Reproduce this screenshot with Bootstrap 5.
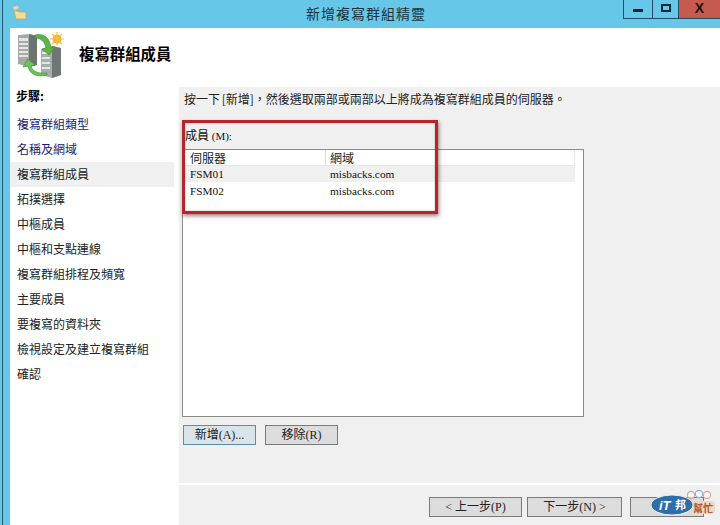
<!DOCTYPE html>
<html lang="zh-Hant">
<head>
<meta charset="utf-8">
<title>新增複寫群組精靈</title>
<link href="https://cdn.jsdelivr.net/npm/bootstrap@5.3.0/dist/css/bootstrap.min.css" rel="stylesheet">
<style>
html,body{width:720px;height:525px;overflow:hidden;margin:0;background:#67c7e8;font-family:"Liberation Serif","Noto Sans CJK TC",serif;font-size:12px;color:#111;line-height:16px}
.frame{position:relative;width:720px;height:525px;padding-left:10px}
.edge{position:absolute;left:2px;top:0;bottom:0;width:1px;background:#27566c}
.titlebar{height:28px;margin-left:-10px;position:relative}
.app-ico{position:absolute;left:11px;top:4px}
.wintitle{position:absolute;left:0;right:0;top:4px;text-align:center;font-size:14px;letter-spacing:1px;line-height:18px;padding-left:12px;color:#1c3440;font-family:"Noto Sans CJK TC",sans-serif}
.winbtns{position:absolute;right:0;top:0;height:19px}
.wb{height:19px;border:1px solid #1f4d66;border-top:0}
.wb-min{width:29px;border-right:0}
.wb-max{width:26px;border-right:0}
.wb-close{width:42px;background:#c75a4e;border:1px solid #1f4d66;border-top:0;border-right:0;font:bold 14px/17px "Liberation Sans",sans-serif;color:#21100e;text-align:center}
.glyph-min{width:10px;height:3px;background:#0c2436;margin-top:9px}
.glyph-max{width:10px;height:8px;border:2px solid #0c2436;margin-top:4px}
.headpane{height:56px;background:#fff;padding-left:7px;width:710px;padding-bottom:2px}
.headtitle{font-size:15.4px;font-weight:700;margin-left:15px;margin-top:-4px;font-family:"Noto Sans CJK TC",sans-serif;color:#000}
.bodypane{height:441px;width:710px;background:#fff}
.steps{width:164px;background:#fff;margin-top:3px}
.steps-h{height:25px;padding:1px 6px;font-weight:700;font-family:"Noto Sans CJK TC",sans-serif;color:#000}
.step{height:25px;line-height:24px;padding-left:7px;font-family:"Noto Sans CJK TC",sans-serif;color:#222;width:164px}
.step-done{color:#1b1b6b}
.step-on{background:#f0f0f0}
.content{width:542px;margin-left:4px;margin-top:3px;background:#f0f0f0;height:438px;border-left:1px solid #fafafa}
.mainpane{height:398px;padding:4px 5px;border-bottom:2px solid #fff}
.intro{font-family:"Noto Sans CJK TC",sans-serif;color:#222;white-space:nowrap;height:16px;word-spacing:-1px}
.label-m{margin-top:21px;height:16px;margin-left:1px}
.lat{font-size:11px}
.listbox{width:402px;height:268px;margin-top:5px;border:1px solid #8a8a8a;background:#fff;margin-left:-2px}
.lhead{height:16px;padding-left:7px;color:#222;font-family:"Noto Sans CJK TC",sans-serif;line-height:16px;width:392px;border-bottom:1px solid #e6e6e6;border-right:1px solid #e6e6e6}
.lrow{height:16px;padding-left:7px;width:392px;font-size:11.3px}
.lrow-2{height:17px;padding-top:1px}
.lrow-on{background:#f0f0f0}
.c1{width:136px;flex:none}
.c1h{border-right:1px solid #ddd}
.c2{padding-left:4px}
.wbtn{height:20px;padding:0;border:1px solid #7a7a7a;border-radius:0;background:#dcdcdc;font-size:12px;line-height:16px;color:#222;font-family:"Liberation Serif","Noto Sans CJK TC",serif;text-align:center}
.w73{width:73px}
.wbtn-focus{border-color:#5d8cab;background:#d8e3ea}
.gap9{gap:9px}
.btnrow{margin-top:8px;margin-left:-1px}
.footbar{padding:12px 0 0 250px;gap:5px}
.w93{width:93px}
.w95{width:95px}
.w-next{margin-left:3px;width:74px}
.redbox{position:absolute;left:182px;top:120px;width:256px;height:94px;border:3px solid #b5262c;box-shadow:1px 2px 4px rgba(90,20,20,.55),inset 0 0 2px rgba(120,20,20,.4);pointer-events:none}
.ithelp{position:absolute;left:651px;top:488px}
.ithelp-t{font:italic bold 13px "Liberation Sans",sans-serif;fill:#fff}
.ithelp-s{font:700 11px "Noto Sans CJK TC",sans-serif;fill:#fff}
.ithelp-b{font:700 10px "Noto Sans CJK TC",sans-serif;fill:#b9552f}
</style>
</head>
<body>
<div class="frame">
  <div class="edge"></div>
  <div class="titlebar">
    <svg class="app-ico" width="17" height="16" viewBox="0 0 17 16"><path d="M1 3l5-2 3 3-5 3z" fill="#d9d5c4" stroke="#a7a38c" stroke-width=".6"/><path d="M3 7h4l1 1h7v7H5z" fill="#f2dc97" stroke="#c2a55c" stroke-width=".7"/></svg>
    <div class="wintitle">新增複寫群組精靈</div>
    <div class="winbtns d-flex">
      <div class="wb wb-min d-flex justify-content-center"><div class="glyph-min"></div></div>
      <div class="wb wb-max d-flex justify-content-center"><div class="glyph-max"></div></div>
      <div class="wb-close">X</div>
    </div>
  </div>
  <div class="headpane d-flex align-items-center">
    <svg width="47" height="46" viewBox="0 0 47 46">
      <path d="M1 3l12-1 7 2v29l-8 2-11-3z" fill="#a5aaa8"/><path d="M12 2l8 2v29l-8 2z" fill="#6c7370"/>
      <path d="M2 6l9 0v3H2zM2 11h9v2H2zM2 15h9v2H2zM2 19h9v2H2zM2 23h9v2H2z" fill="#e4e6e4"/>
      <path d="M24 17l11-3 9 2v27l-9 3-11-3z" fill="#a8adab"/><path d="M35 14l9 2v27l-9 3z" fill="#6f7673"/>
      <path d="M25 20h8v2h-8zM25 25h8v2h-8zM25 30h8v2h-8zM25 35h8v2h-8z" fill="#e6e8e6"/>
      <path d="M18 3c9-2 15 3 16 13l4-1-6 8-7-6 4-1c-1-6-5-10-11-10z" fill="#5cb545" stroke="#3d8b32" stroke-width=".6"/>
      <path d="M30 43C20 46 12 42 11 34L6 35l5-8 7 6-4 1c1 5 7 8 16 7z" fill="#6cc355" stroke="#3d8b32" stroke-width=".6"/>
      <circle cx="40" cy="7" r="4.5" fill="#f5b021"/><path d="M40 0v14M33 7h14M35 2l10 10M45 2L35 12" stroke="#f7c04a" stroke-width="1.2"/>
    </svg>
    <div class="headtitle">複寫群組成員</div>
  </div>
  <div class="bodypane d-flex">
    <div class="steps">
      <div class="steps-h">步驟:</div>
      <div class="step step-done">複寫群組類型</div>
      <div class="step step-done">名稱及網域</div>
      <div class="step step-on">複寫群組成員</div>
      <div class="step">拓撲選擇</div>
      <div class="step">中樞成員</div>
      <div class="step">中樞和支點連線</div>
      <div class="step">複寫群組排程及頻寬</div>
      <div class="step">主要成員</div>
      <div class="step">要複寫的資料夾</div>
      <div class="step">檢視設定及建立複寫群組</div>
      <div class="step">確認</div>
    </div>
    <div class="content">
      <div class="mainpane">
        <div class="intro">按一下 [新增]，然後選取兩部或兩部以上將成為複寫群組成員的伺服器。</div>
        <div class="label-m">成員<span class="lat"> (M):</span></div>
        <div class="listbox">
          <div class="lhead d-flex"><div class="c1 c1h">伺服器</div><div class="c2">網域</div></div>
          <div class="lrow lrow-on d-flex"><div class="c1">FSM01</div><div class="c2">misbacks.com</div></div>
          <div class="lrow lrow-2 d-flex"><div class="c1">FSM02</div><div class="c2">misbacks.com</div></div>
        </div>
        <div class="d-flex gap9 btnrow">
          <button type="button" class="btn wbtn wbtn-focus w73">新增(A)...</button>
          <button type="button" class="btn wbtn w73">移除(R)</button>
        </div>
      </div>
      <div class="d-flex footbar">
        <button type="button" class="btn wbtn w93">&lt; 上一步(P)</button>
        <button type="button" class="btn wbtn w95">下一步(N) &gt;</button>
        <button type="button" class="btn wbtn w-next" aria-label="完成"></button>
      </div>
    </div>
  </div>
  <div class="redbox"></div>
  <svg class="ithelp" width="69" height="37" viewBox="0 0 69 37">
    <circle cx="40" cy="7" r="3.6" fill="#fff" fill-opacity=".6" stroke="#d9a89a" stroke-width="1.2"/><circle cx="48" cy="6" r="3.6" fill="#fff" fill-opacity=".6" stroke="#8ab4d0" stroke-width="1.2"/><circle cx="56" cy="7" r="3.6" fill="#fff" fill-opacity=".6" stroke="#d9a89a" stroke-width="1.2"/>
    <rect x="40" y="13" width="24" height="13" rx="4" fill="#ecd9bf"/>
    <ellipse cx="21" cy="17" rx="21" ry="10" fill="#2d6ea8" stroke="#e6eef4" stroke-width="1"/>
    <text x="8" y="22" class="ithelp-t">iT</text>
    <text x="24" y="21" class="ithelp-s">邦</text>
    <text x="42" y="24" class="ithelp-b">幫忙</text>
  </svg>
</div>
<script src="https://cdn.jsdelivr.net/npm/bootstrap@5.3.0/dist/js/bootstrap.bundle.min.js"></script>
</body>
</html>
